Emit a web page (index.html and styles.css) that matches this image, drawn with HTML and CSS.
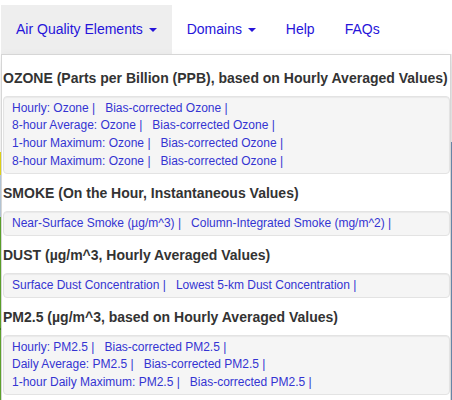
FILE: index.html
```html
<!DOCTYPE html>
<html>
<head>
<meta charset="utf-8">
<link rel="stylesheet" href="styles.css">
</head>
<body>
<div class="page">
  <div class="map" aria-hidden="true"></div>
  <nav class="navbar">
    <ul class="nav">
      <li class="nav-item open"><a href="#">Air Quality Elements <span class="caret"></span></a></li>
      <li class="nav-item"><a href="#">Domains <span class="caret"></span></a></li>
      <li class="nav-item"><a href="#">Help</a></li>
      <li class="nav-item"><a href="#">FAQs</a></li>
    </ul>
  </nav>
  <div class="dropdown">
    <h4 class="sect">OZONE (Parts per Billion (PPB), based on Hourly Averaged Values)</h4>
    <div class="well">
      <div class="row"><a class="lnk" href="#">Hourly: Ozone |</a><a class="lnk" href="#">Bias-corrected Ozone |</a></div>
      <div class="row"><a class="lnk" href="#">8-hour Average: Ozone |</a><a class="lnk" href="#">Bias-corrected Ozone |</a></div>
      <div class="row"><a class="lnk" href="#">1-hour Maximum: Ozone |</a><a class="lnk" href="#">Bias-corrected Ozone |</a></div>
      <div class="row"><a class="lnk" href="#">8-hour Maximum: Ozone |</a><a class="lnk" href="#">Bias-corrected Ozone |</a></div>
    </div>
    <h4 class="sect">SMOKE (On the Hour, Instantaneous Values)</h4>
    <div class="well">
      <div class="row"><a class="lnk" href="#">Near-Surface Smoke (µg/m^3) |</a><a class="lnk" href="#">Column-Integrated Smoke (mg/m^2) |</a></div>
    </div>
    <h4 class="sect">DUST (µg/m^3, Hourly Averaged Values)</h4>
    <div class="well">
      <div class="row"><a class="lnk" href="#">Surface Dust Concentration |</a><a class="lnk" href="#">Lowest 5-km Dust Concentration |</a></div>
    </div>
    <h4 class="sect">PM2.5 (µg/m^3, based on Hourly Averaged Values)</h4>
    <div class="well">
      <div class="row"><a class="lnk" href="#">Hourly: PM2.5 |</a><a class="lnk" href="#">Bias-corrected PM2.5 |</a></div>
      <div class="row"><a class="lnk" href="#">Daily Average: PM2.5 |</a><a class="lnk" href="#">Bias-corrected PM2.5 |</a></div>
      <div class="row"><a class="lnk" href="#">1-hour Daily Maximum: PM2.5 |</a><a class="lnk" href="#">Bias-corrected PM2.5 |</a></div>
    </div>
  </div>
</div>
</body>
</html>
```
FILE: styles.css
```css
* { box-sizing: border-box; }
html, body { margin: 0; padding: 0; }
body {
  font-family: "Liberation Sans", Arial, Helvetica, sans-serif;
  font-size: 14px;
  color: #333;
  background: #fff;
  overflow: hidden;
}
.page {
  position: relative;
  width: 452px;
  height: 400px;
  overflow: hidden;
}
.map {
  position: absolute;
  left: 0;
  top: 54px;
  width: 452px;
  height: 346px;
  z-index: 0;
  background:
    linear-gradient(to bottom, transparent 0 98px, #e9dc18 98px 121px, #bccfe0 121px 163px, #5fa82c 163px 274px, #3f7f1e 274px 276px, #62aa2e 276px) left top / 4px 100% no-repeat,
    linear-gradient(to bottom, #eeeeee 0 88px, #6d8cb0 88px) right top / 4px 100% no-repeat,
    #ffffff;
}
.navbar {
  position: relative;
  z-index: 1;
  padding-top: 5px;
  padding-left: 1px;
}
.nav {
  list-style: none;
  margin: 0;
  padding: 0;
  display: flex;
}
.nav-item a {
  display: block;
  padding: 0 15px;
  height: 49px;
  line-height: 49px;
  font-size: 14px;
  color: #2614da;
  text-decoration: none;
}
.nav-item.open a { background: #eeeeee; }
.caret {
  display: inline-block;
  width: 0;
  height: 0;
  margin-left: 2px;
  vertical-align: middle;
  border-top: 4px solid;
  border-right: 4px solid transparent;
  border-left: 4px solid transparent;
}
.dropdown {
  position: absolute;
  z-index: 2;
  left: 1px;
  top: 54px;
  width: 450px;
  background: #fff;
  border: 1px solid #d6d6d6;
  padding: 4px 0 10px 1px;
  box-shadow: 0 6px 12px rgba(0,0,0,0.12);
}
.sect {
  margin: 9px 0 8px 0;
  font-size: 14px;
  line-height: 20px;
  font-weight: bold;
  color: #333;
  white-space: nowrap;
}
.dropdown .sect:first-child { margin-top: 9px; }
.well {
  background: #f5f5f5;
  border: 1px solid #e3e3e3;
  border-radius: 4px;
  box-shadow: inset 0 1px 1px rgba(0,0,0,0.05);
  padding: 2.67px 8px;
  font-size: 12px;
  line-height: 17.67px;
}
.row { white-space: nowrap; }
.lnk {
  color: #3434d2;
  text-decoration: none;
  margin-right: 10px;
}
```
